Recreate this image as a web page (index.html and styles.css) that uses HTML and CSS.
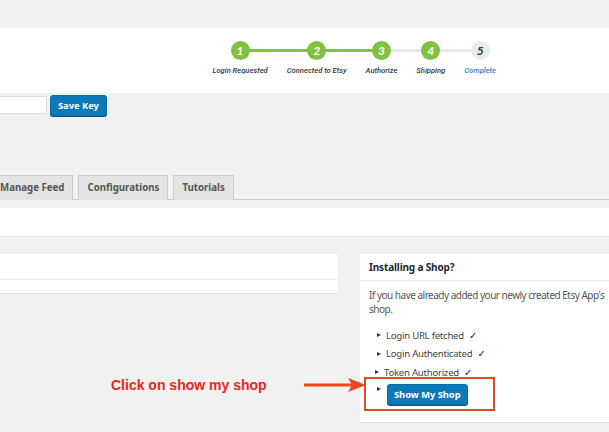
FILE: index.html
```html
<!DOCTYPE html>
<html>
<head>
<meta charset="utf-8">
<link rel="stylesheet" href="styles.css">
</head>
<body>
<div class="topgap"></div>
<header class="header">
  <ol class="steps">
    <li class="step done"><span class="dot">1</span><span class="label">Login Requested</span></li>
    <li class="step done"><span class="dot">2</span><span class="label">Connected to Etsy</span></li>
    <li class="step done half"><span class="dot">3</span><span class="label">Authorize</span></li>
    <li class="step done gray"><span class="dot">4</span><span class="label">Shipping</span></li>
    <li class="step current"><span class="dot">5</span><span class="label">Complete</span></li>
  </ol>
</header>
<div class="keyrow">
  <input class="keyinput" type="text">
  <button class="btn">Save Key</button>
</div>
<nav class="tabs">
  <span class="tab first">Manage Feed</span>
  <span class="tab">Configurations</span>
  <span class="tab">Tutorials</span>
</nav>
<div class="strip"></div>
<main class="content">
  <section class="leftbox">
    <div class="leftbox-head"></div>
  </section>
  <aside class="sidebox">
    <h3 class="sidebox-title">Installing a Shop?</h3>
    <div class="sidebox-body">
      <p class="intro">If you have already added your newly created Etsy App's shop.</p>
      <ul class="checklist">
        <li><span class="tri"></span>Login URL fetched <span class="tick">✓</span></li>
        <li><span class="tri"></span>Login Authenticated <span class="tick">✓</span></li>
        <li class="shift"><span class="tri"></span>Token Authorized <span class="tick">✓</span></li>
        <li class="btnitem"><span class="tri"></span><button class="btn shop">Show My Shop</button></li>
      </ul>
    </div>
  </aside>
  <div class="annotation">
    <span class="note">Click on show my shop</span>
    <svg class="arrow" width="62" height="16" viewBox="0 0 62 16">
      <path d="M0 8 H50" stroke="#e8491d" stroke-width="3" fill="none"/>
      <path d="M44 1 L62 8 L44 15 L48 8 Z" fill="#e8491d"/>
    </svg>
  </div>
  <div class="highlight"></div>
</main>
</body>
</html>
```

FILE: styles.css
```css
html, body {
  margin: 0;
  padding: 0;
}
body {
  background: #f1f1f1;
  width: 609px;
  height: 432px;
  overflow: hidden;
  font-family: "Noto Sans", "Open Sans", sans-serif;
  color: #444;
}
.topgap {
  height: 28px;
}
.header {
  background: #fff;
  height: 65px;
  display: flex;
  justify-content: flex-end;
  padding-right: 113px;
  box-sizing: border-box;
}
.steps {
  list-style: none;
  margin: 0;
  padding: 13px 0 0;
  display: flex;
  gap: 19px;
}
.step {
  position: relative;
  display: flex;
  flex-direction: column;
  align-items: center;
}
.step::before,
.step::after {
  content: "";
  position: absolute;
  top: 8px;
  height: 3px;
  background: #7fc241;
  z-index: 0;
}
.step::before {
  left: 0;
  width: 50%;
}
.step::after {
  left: 50%;
  width: calc(50% + 19px);
}
.step:first-child::before,
.step:last-child::after {
  display: none;
}
.step.half::after,
.step.gray::before,
.step.gray::after,
.step.current::before {
  background: #e6e8ea;
}
.dot {
  position: relative;
  z-index: 1;
  width: 19px;
  height: 19px;
  border-radius: 50%;
  background: #7fc241;
  color: #fff;
  font-family: Lato, "Liberation Sans", sans-serif;
  font-style: italic;
  font-weight: 700;
  font-size: 12px;
  line-height: 19px;
  text-align: center;
}
.step.current .dot {
  background: #e9ecef;
  color: #2a3540;
}
.label {
  margin-top: 6px;
  font-family: Roboto, "Liberation Sans", sans-serif;
  font-style: italic;
  font-weight: 500;
  font-size: 7.6px;
  color: #33363a;
  white-space: nowrap;
}
.step.current .label {
  color: #3a7cc0;
}
.keyrow {
  display: flex;
  align-items: center;
  gap: 3px;
  height: 24px;
}
.keyinput {
  width: 47px;
  height: 18px;
  box-sizing: border-box;
  border: 1px solid #ddd;
  border-left: none;
  background: #fff;
  margin: 0;
  padding: 0;
}
.btn {
  background: #0c79b9;
  border: 1px solid #0a6aa3;
  border-radius: 3px;
  color: #fff;
  font-family: "Noto Sans", sans-serif;
  font-weight: 700;
  font-size: 9.3px;
  height: 21px;
  padding: 0 7px;
  box-shadow: 0 1px 0 #075a8a;
  cursor: pointer;
}
.tabs {
  margin-top: 57px;
  display: flex;
  gap: 5px;
  border-bottom: 1px solid #ccc;
  height: 25px;
  align-items: flex-end;
}
.tab {
  height: 25px;
  box-sizing: border-box;
  background: #e4e4e4;
  border: 1px solid #ccc;
  border-bottom: none;
  padding: 0 8px;
  font-weight: 700;
  font-size: 9.7px;
  color: #555;
  line-height: 24px;
  margin-bottom: -1px;
}
.tab.first {
  border-left: none;
  padding-left: 0;
}
.strip {
  margin-top: 8px;
  height: 28px;
  background: #fff;
  border-bottom: 1px solid #e6e6e6;
}
.content {
  position: relative;
  margin-top: 17px;
  display: flex;
  align-items: flex-start;
  gap: 22px;
}
.leftbox {
  flex: none;
  width: 338px;
  height: 39px;
  background: #fff;
  box-shadow: 0 1px 1px rgba(0,0,0,0.06);
}
.leftbox-head {
  height: 25px;
  border-bottom: 1px solid #eee;
}
.sidebox {
  flex: 1;
  min-width: 0;
  overflow: hidden;
  background: #fff;
  height: 168px;
  box-shadow: 0 1px 1px rgba(0,0,0,0.06);
}
.sidebox-title {
  margin: 0;
  padding: 0 9px;
  height: 26px;
  line-height: 26px;
  font-size: 10px;
  font-weight: 700;
  letter-spacing: -0.15px;
  color: #23282d;
  border-bottom: 1px solid #eee;
}
.sidebox-body {
  padding: 7px 9px 0;
}
.intro {
  margin: 0;
  font-size: 10px;
  line-height: 14px;
  color: #555;
  letter-spacing: -0.5px;
  width: 240px;
}
.checklist {
  list-style: none;
  margin: 10px 0 0;
  padding: 0 0 0 8px;
  font-size: 9.6px;
  letter-spacing: -0.25px;
  color: #444;
}
.checklist li {
  display: flex;
  align-items: center;
  height: 18.5px;
  white-space: nowrap;
}
.checklist li.shift {
  margin-left: -2px;
}
.tri {
  flex: none;
  width: 0;
  height: 0;
  border-left: 4px solid #333;
  border-top: 2.5px solid transparent;
  border-bottom: 2.5px solid transparent;
  margin-right: 5px;
}
.tick {
  margin-left: 5px;
  color: #222;
  font-family: "DejaVu Sans", sans-serif;
  font-weight: 700;
  font-size: 10px;
}
.checklist li.btnitem {
  height: auto;
  align-items: flex-start;
  margin-top: 2px;
  letter-spacing: 0;
}
.btnitem .tri {
  margin-top: 3px;
}
.btn.shop {
  margin-left: 1px;
  height: 21px;
  padding: 0 6px;
}
.annotation {
  position: absolute;
  left: 111px;
  top: 123px;
  display: flex;
  align-items: center;
  gap: 37px;
}
.note {
  font-family: "Liberation Sans", Arial, sans-serif;
  font-weight: 700;
  font-size: 14px;
  color: #e8261b;
}
.highlight {
  position: absolute;
  left: 364px;
  top: 123px;
  width: 131px;
  height: 34px;
  box-sizing: border-box;
  border: 2px solid #dc4c26;
}
```
